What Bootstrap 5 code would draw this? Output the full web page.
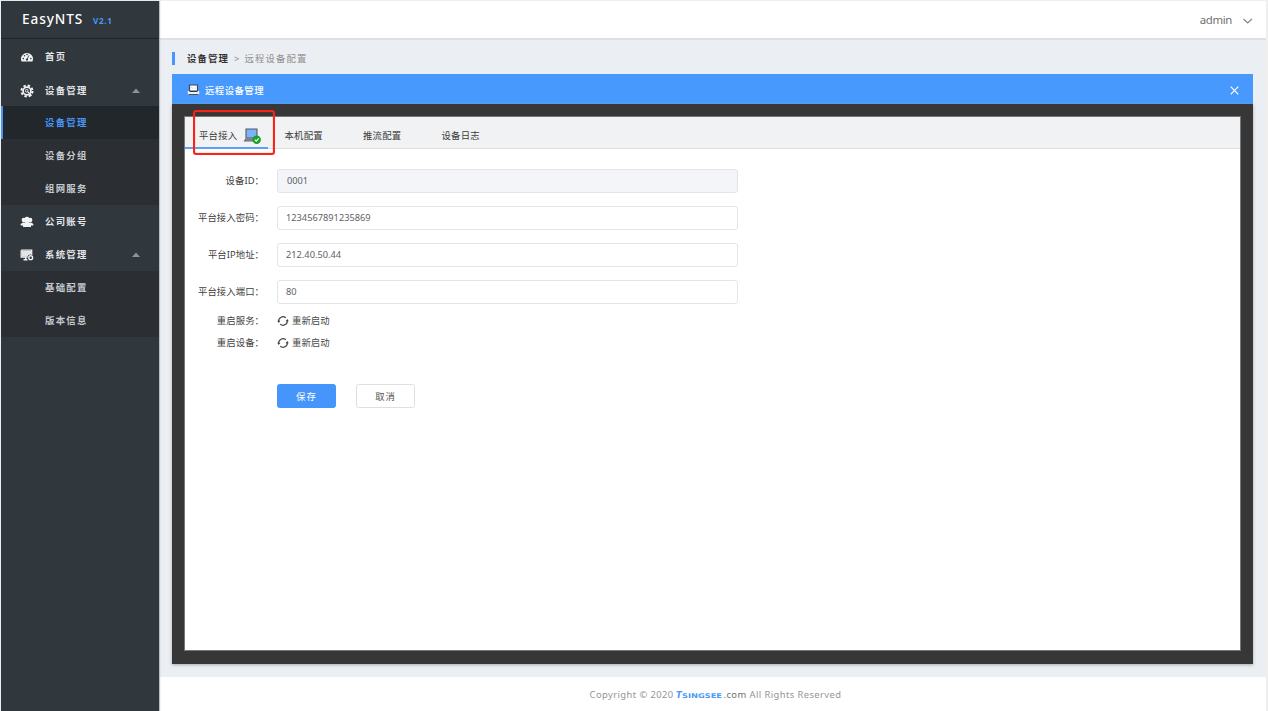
<!DOCTYPE html>
<html lang="zh-CN">
<head>
<meta charset="utf-8">
<meta name="viewport" content="width=device-width, initial-scale=1">
<title>EasyNTS</title>
<link href="https://cdn.jsdelivr.net/npm/bootstrap@5.3.0/dist/css/bootstrap.min.css" rel="stylesheet">
<style>
  html, body { height: 100%; overflow: hidden; }
  body { font-family: "Noto Sans", "Noto Sans CJK SC", sans-serif; font-size: 9.4px; line-height: 14px; color: #4a4a4a; background: #efefef; padding: 1px 2px 0 1px; }
  svg { display: block; flex: none; }
  .side { width: 158px; background: #30373d; box-shadow: 1px 0 1px #b9bec6; z-index: 2; letter-spacing: 1.25px; font-weight: 700; color: #e4e6e8; }
  .brand { height: 38px; border-bottom: 1px solid #20252a; padding: 0 0 2px 21px; font-size: 13.6px; color: #fff; font-weight: 500; letter-spacing: .9px; }
  .brand small { font-size: 8.2px; color: #4896f5; font-weight: 700; margin-left: 10px; padding-top: 4px; letter-spacing: .6px; }
  .item { height: 33px; padding-left: 19px; }
  .item.home { height: 34px; padding-top: 1px; }
  .item.devices { padding-top: 2px; }
  .item .ico { width: 14px; margin-right: 11px; }
  .item .caret { margin-left: auto; margin-right: 19px; }
  .sub { background: #2b2f33; color: #c6c9ce; }
  .sub .entry { height: 33px; padding-left: 44px; }
  .sub .entry.active { background: #22272c; color: #4896f5; box-shadow: inset 2px 0 #4896f5; }
  .top { height: 39px; background: #fff; border-bottom: 2px solid #dce0e4; padding-right: 13px; font-size: 11.4px; color: #707070; letter-spacing: -.35px; }
  .main-area { background: #ebeef3; padding: 0 13px 13px; }
  .crumbs { height: 34px; letter-spacing: 1.12px; padding-top: 3px; color: #8f8f8f; }
  .crumbs .bar { width: 3px; height: 13px; background: #4896fb; margin-right: 12px; }
  .crumbs .sep { margin: 0 4px 0 5px; }
  .crumbs b { color: #333; }
  .panel-head { height: 30px; background: #4799fd; color: #fff; font-weight: 500; padding: 2px 14px 0 15px; letter-spacing: .45px; }
  .panel-head .title { padding-left: 5px; padding-top: 1px; }
  .panel-frame { background: #373737; padding: 13px 13px 14px 13px; box-shadow: 0 1px 3px #aaa; }
  .sheet { background: #fff; box-shadow: 0 0 0 1px #777; }
  .tabs { height: 32px; background: #f1f2f4; border-bottom: 1px solid #dedfe2; color: #3c3c3c; letter-spacing: .2px; }
  .tabs .tab { width: 78.5px; height: 32px; padding-left: 16.5px; padding-top: 5px; }
  .tabs .tab.active { width: 83px; border-bottom: 2px solid #5ba1f8; padding-left: 14px; padding-top: 7px; }
  .outline-box { left: 8px; top: -7px; width: 82px; height: 45px; border: 2px solid #fb2218; border-radius: 3px; box-shadow: inset 0 0 1px #fb2218; }
  .form-body { padding-top: 19px; }
  .field { height: 25px; margin-bottom: 12px; }
  .field .name, .redo .name { width: 79px; text-align: right; margin-right: 13px; color: #3f3f3f; letter-spacing: .05px; white-space: nowrap; }
  .field .form-control { width: 461px; height: 24px; min-height: 0; padding: 0 8px; font-size: 9.25px; line-height: 14px; border: 1px solid #e2e4e8; border-radius: 3px; color: #606266; }
  .field .form-control:disabled { background: #f3f5f9; padding-left: 9px; }
  .redo { height: 22px; }
  .redo-list { padding-top: 2px; }
  .redo .again { margin-left: 3px; }
  .actions { padding: 30px 0 0 92px; gap: 20px; }
  .act { width: 59px; height: 24px; font-size: 9.4px; line-height: 14px; padding: 2px 0 0; border-radius: 2.5px; }
  .act.btn-primary { background: #4595fb; border-color: #4595fb; letter-spacing: 1.2px; }
  .act.btn-light { background: #fff; border-color: #dcdfe4; color: #555; letter-spacing: .8px; }
  .foot { height: 34px; background: #fff; color: #959595; letter-spacing: .42px; padding-left: 6px; padding-top: 1px; }
  .foot .dom { color: #707070; }
</style>
</head>
<body>
<svg width="0" height="0" class="position-absolute"><defs>
  <symbol id="redo" viewBox="0 0 12 12"><path d="M1.700 6.500A4.300 4.300 0 0 1 8.900 2.900M10.300 5.500A4.300 4.300 0 0 1 3.100 9.100" fill="none" stroke="#444" stroke-width="1.200"/><path d="M.2 5.700h3.200L1.700 7.900zM8.600 6.300h3.200L10.300 4.100z" fill="#444"/></symbol>
  <symbol id="up" viewBox="0 0 8 5"><path d="M0 5 4 0.5 8 5z" fill="#8d9399"/></symbol>
</defs></svg>
<div class="d-flex h-100">
  <aside class="side d-flex flex-column flex-shrink-0">
    <div class="brand d-flex align-items-center">EasyNTS <small>V2.1</small></div>
    <div class="item home d-flex align-items-center">
      <svg class="ico" height="12" viewBox="0 0 14 12"><path d="M1.600 10.500A6 6 0 1 1 12.400 10.500z" fill="#f2f3f4"/><g fill="#30373d"><circle cx="3.300" cy="7.600" r=".8"/><circle cx="4.500" cy="4.700" r=".8"/><circle cx="7" cy="3.500" r=".8"/><circle cx="10.800" cy="7.600" r=".8"/><circle cx="7" cy="8.600" r="1.100"/></g><path d="M7 8.600 8.900 4.300" stroke="#30373d" stroke-width=".8"/></svg>
      首页</div>
    <div class="item devices d-flex align-items-center">
      <svg class="ico" height="14" viewBox="0 0 14 14"><circle cx="7" cy="7" r="5.500" fill="none" stroke="#f2f3f4" stroke-width="2" stroke-dasharray="2.400 1.920"/><circle cx="7" cy="7" r="3.900" fill="none" stroke="#f2f3f4" stroke-width="1.700"/><circle cx="6.700" cy="6.700" r="1.300" fill="none" stroke="#f2f3f4"/><path d="m7.600 7.600 4 4" stroke="#f2f3f4" stroke-width="1.300"/></svg>
      设备管理<svg class="caret" width="8" height="5"><use href="#up"/></svg></div>
    <div class="sub">
      <div class="entry active d-flex align-items-center">设备管理</div>
      <div class="entry d-flex align-items-center">设备分组</div>
      <div class="entry d-flex align-items-center">组网服务</div>
    </div>
    <div class="item d-flex align-items-center">
      <svg class="ico" height="12" viewBox="0 0 14 12"><g fill="#f2f3f4"><circle cx="3.800" cy="4" r="2.200"/><circle cx="10.200" cy="4" r="2.200"/><path d="M.8 9.500V8.300Q1 7 3.200 6.500h7.600Q13 7 13.200 8.300v1.200z"/><ellipse cx="7" cy="4" rx="2.600" ry="3.200"/><path d="M3 11V9.200Q3.200 8 6 7.200V6h2v1.200Q10.800 8 11 9.200V11z"/></g></svg>
      公司账号</div>
    <div class="item d-flex align-items-center">
      <svg class="ico" height="12" viewBox="0 0 14 12"><path d="M1.200 1.200h10.500v5M8 8H1.200V1.200" fill="none" stroke="#f2f3f4" stroke-width="1.300"/><path d="M2 2h9v4L8 7.500H2z" fill="#e3e5e7"/><path d="M3.500 10.800h4M5.700 8v3" stroke="#f2f3f4" stroke-width="1.400"/><circle cx="10.700" cy="8.700" r="3.200" fill="#30373d"/><circle cx="10.700" cy="8.700" r="1.900" fill="#30373d" stroke="#f2f3f4" stroke-width="1.400"/></svg>
      系统管理<svg class="caret" width="8" height="5"><use href="#up"/></svg></div>
    <div class="sub">
      <div class="entry d-flex align-items-center">基础配置</div>
      <div class="entry d-flex align-items-center">版本信息</div>
    </div>
  </aside>
  <div class="d-flex flex-column flex-grow-1">
    <header class="top d-flex align-items-center justify-content-end">admin
      <svg class="ms-2 mt-1" width="13" height="8" viewBox="0 0 13 8"><path d="m3.500 1 4.200 4 4.200-4" fill="none" stroke="#858585" stroke-width="1.200"/></svg></header>
    <main class="main-area d-flex flex-column flex-grow-1">
      <div class="crumbs d-flex align-items-center"><span class="bar"></span><b>设备管理</b><span class="sep">&gt;</span><span>远程设备配置</span></div>
      <div class="panel-head d-flex align-items-center">
        <svg width="13" height="12" viewBox="0 0 13 12"><path d="M2.500 1h8v6h-8z" fill="#fff" stroke="#38496a" stroke-width="1.200"/><path d="m4 3 2 1.500M7.500 4.500l1.500-1" stroke="#e5a2a8" stroke-width=".6"/><path d="M.8 7h11.400v3.500H.8z" fill="#f6f0e6"/><path d="M2.500 7.500h8" stroke="#26384e" stroke-width="1"/><path d="M1.500 10.500h10" stroke="#455365" stroke-width="1"/></svg>
        <span class="title me-auto">远程设备管理</span>
        <svg width="9" height="9" viewBox="0 0 9 9"><path d="m.7.7 7.600 7.600M8.300.7.700 8.300" stroke="#fff" stroke-width="1.200"/></svg></div>
      <div class="panel-frame d-flex flex-column flex-grow-1">
        <section class="sheet flex-grow-1">
          <div class="tabs d-flex position-relative">
            <div class="tab active d-flex align-items-center">平台接入
              <svg class="ms-1" width="22" height="18" viewBox="-1 0 22 18"><path d="M4 2h11v9H4z" fill="#7bb3fa" stroke="#555b63" stroke-width="1.100"/><path d="m3.500 11.500-2 3h11v-3z" fill="#656a70"/><path d="M4 13h6" stroke="#b9bdc2" stroke-width=".6"/><circle cx="14.700" cy="12.700" r="4.200" fill="#13a323"/><path d="m12.800 12.700 1.400 1.400 2.500-2.700" fill="none" stroke="#fff" stroke-width="1.200"/></svg></div>
            <div class="tab d-flex align-items-center">本机配置</div>
            <div class="tab d-flex align-items-center">推流配置</div>
            <div class="tab d-flex align-items-center">设备日志</div>
            <span class="outline-box position-absolute"></span>
          </div>
          <div class="form-body">
            <div class="field d-flex align-items-center"><label class="name">设备ID：</label><input class="form-control" value="0001" disabled></div>
            <div class="field d-flex align-items-center"><label class="name">平台接入密码：</label><input class="form-control" value="1234567891235869"></div>
            <div class="field d-flex align-items-center"><label class="name">平台IP地址：</label><input class="form-control" value="212.40.50.44"></div>
            <div class="field d-flex align-items-center mb-1"><label class="name">平台接入端口：</label><input class="form-control" value="80"></div>
            <div class="redo-list">
              <div class="redo d-flex align-items-center"><span class="name">重启服务：</span><svg width="12" height="12"><use href="#redo"/></svg><span class="again">重新启动</span></div>
              <div class="redo d-flex align-items-center"><span class="name">重启设备：</span><svg width="12" height="12"><use href="#redo"/></svg><span class="again">重新启动</span></div>
            </div>
            <div class="actions d-flex"><button class="btn btn-primary act">保存</button><button class="btn btn-light act">取消</button></div>
          </div>
        </section>
      </div>
    </main>
    <footer class="foot d-flex align-items-center justify-content-center">Copyright © 2020&nbsp;<svg width="47" height="9" viewBox="0 0 47 9"><text y="7.500" font-family="DejaVu Sans, sans-serif" font-weight="700" fill="#4a99f8" letter-spacing="0"><tspan x="0" font-size="8.500" font-style="italic">T</tspan><tspan x="6" font-size="6.500" textLength="40" lengthAdjust="spacingAndGlyphs">SINGSEE</tspan></text></svg><span class="dom">.com</span>&nbsp;All Rights Reserved</footer>
  </div>
</div>
<script src="https://cdn.jsdelivr.net/npm/bootstrap@5.3.0/dist/js/bootstrap.bundle.min.js"></script>
</body>
</html>
